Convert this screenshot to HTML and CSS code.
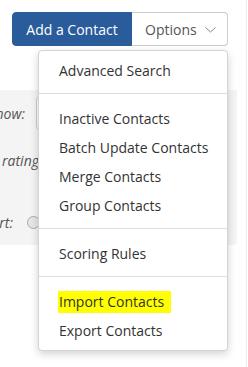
FILE: index.html
```html
<!DOCTYPE html>
<html lang="en">
<head>
    <meta charset="UTF-8">
    <title>Contacts</title>
    <link rel="stylesheet" href="styles.css">
</head>
<body>
    <div class="page">
        <div class="toolbar">
            <div class="btn-group">
                <button class="btn btn-primary">Add a Contact</button>
                <div class="dropdown">
                    <button class="btn btn-default">Options
                        <svg class="caret" width="11" height="6" viewBox="0 0 11 6"><path d="M0.5 0.5 L5.5 5 L10.5 0.5" fill="none" stroke="#888" stroke-width="1"/></svg>
                    </button>
                    <ul class="dropdown-menu">
                        <li><a href="#">Advanced Search</a></li>
                        <li class="divider"></li>
                        <li><a href="#">Inactive Contacts</a></li>
                        <li><a href="#">Batch Update Contacts</a></li>
                        <li><a href="#">Merge Contacts</a></li>
                        <li><a href="#">Group Contacts</a></li>
                        <li class="divider"></li>
                        <li><a href="#">Scoring Rules</a></li>
                        <li class="divider"></li>
                        <li><a href="#"><span class="highlight">Import Contacts</span></a></li>
                        <li><a href="#">Export Contacts</a></li>
                    </ul>
                </div>
            </div>
        </div>

        <!-- filter panel, mostly hidden behind the menu -->
        <div class="filters">
            <div class="row row-show">
                <label class="label label-show">Show:</label>
                <div class="input"></div>
            </div>
            <div class="row row-rating">
                <label class="label label-rating">Filter by rating</label>
            </div>
            <div class="row row-sort">
                <label class="label label-sort">Sort:</label>
                <span class="radio"></span>
            </div>
        </div>
    </div>
</body>
</html>
```

FILE: styles.css
```css
body {
    margin: 0;
    font-family: 'Open Sans', sans-serif;
    font-size: 14px;
    color: #333;
    background: #fff;
}

.page {
    width: 246px;
    height: 367px;
    border-right: 1px solid #ececec;
    overflow: hidden;
}

.toolbar {
    padding: 12px 0 0 12px;
}

.btn-group {
    display: flex;
    position: relative;
}

.btn {
    font-family: 'Open Sans', sans-serif;
    font-size: 14px;
    height: 34px;
    margin: 0;
    cursor: pointer;
}

.btn-primary {
    width: 120px;
    padding: 0;
    color: #fff;
    background: #2a5c9c;
    border: 1px solid #2a5c9c;
    border-radius: 4px 0 0 4px;
}

.btn-default {
    display: flex;
    align-items: center;
    width: 96px;
    padding: 0 0 0 13px;
    color: #555;
    background: #fff;
    border: 1px solid #ccc;
    border-left: none;
    border-radius: 0 4px 4px 0;
}

.caret {
    margin-left: 8px;
    margin-top: 2px;
}

.dropdown {
    position: relative;
}

/* menu hangs off the right edge of Options */
.dropdown-menu {
    position: absolute;
    top: 38px;
    right: 0;
    z-index: 10;
    width: 188px;
    margin: 0;
    padding: 5px 0;
    list-style: none;
    background: #fff;
    border: 1px solid #d4d4d4;
    border-radius: 4px;
    box-shadow: 0 3px 8px rgba(0, 0, 0, 0.18);
}

.dropdown-menu a {
    display: block;
    height: 29px;
    line-height: 29px;
    padding: 0 0 0 20px;
    color: #333;
    text-decoration: none;
    white-space: nowrap;
}

.dropdown-menu .divider {
    height: 1px;
    margin: 8px 0 10px;
    background: #ddd;
}

.highlight {
    background: #ffff00;
    padding: 1px 7px 2px 1px;
    margin-left: -1px;
}

.filters {
    width: 237px;
    height: 155px;
    margin-top: 44px;
    background: #f4f4f4;
    border-radius: 0 0 4px 0;
}

.row {
    display: flex;
    align-items: center;
}

.label {
    display: flex;
    justify-content: flex-end;
    overflow: hidden;
    white-space: nowrap;
    font-style: italic;
    color: #555;
}

.row-show {
    padding-top: 6px;
    height: 34px;
}

.label-show {
    width: 25px;
}

.input {
    width: 120px;
    height: 32px;
    margin-left: 11px;
    background: #fff;
    border: 1px solid #ccc;
    border-radius: 4px;
}

.row-rating {
    margin-top: 20px;
    height: 20px;
}

.label-rating {
    width: 39px;
}

.row-sort {
    margin-top: 42px;
    height: 20px;
}

.label-sort {
    width: 13px;
}

.radio {
    width: 11px;
    height: 11px;
    margin-left: 14px;
    border: 1px solid #aaa;
    border-radius: 50%;
    background: #e6e6e6;
}
```
